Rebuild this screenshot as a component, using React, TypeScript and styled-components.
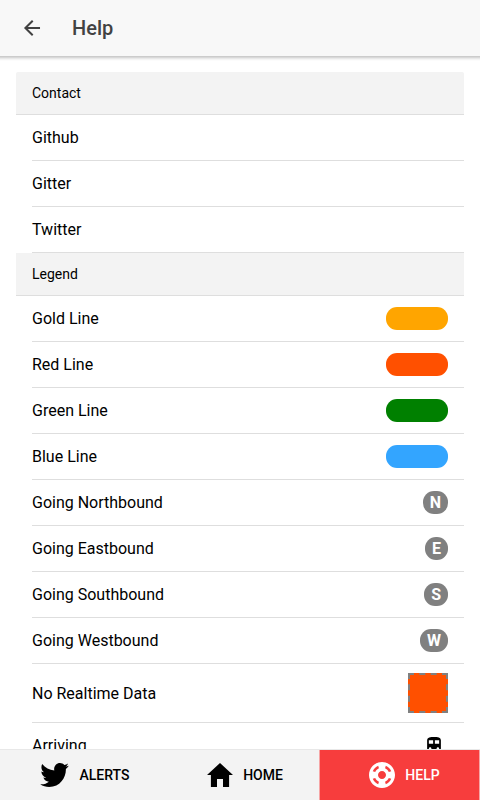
import React from "react";
import styled, { createGlobalStyle, css } from "styled-components";
import {
  IoLogoTwitter,
  IoMdArrowBack,
  IoMdHelpBuoy,
  IoMdHome,
  IoMdTrain,
} from "react-icons/io";

const GlobalStyle = createGlobalStyle`
  * { box-sizing: border-box; }
  body {
    margin: 0;
    overflow: hidden;
    background: #fff;
    color: #000;
    font-family: Roboto, "Open Sans", sans-serif;
  }
`;

const Page = styled.div`
  display: flex;
  flex-direction: column;
  height: 800px;
  overflow: hidden;
`;

const Toolbar = styled.header`
  display: flex;
  flex: none;
  align-items: center;
  height: 56px;
  padding-left: 20px;
  background: #f8f8f8;
  color: #424242;
`;

const ToolbarShadow = styled.div`
  flex: none;
  height: 5px;
  background: linear-gradient(
    #cccccc 0 1px,
    #d9d9d9 1px 2px,
    #e9e9e9 2px 3px,
    #f5f5f5 3px 4px,
    #fcfcfc 4px 5px
  );
`;

const BackButton = styled.button`
  display: flex;
  width: 24px;
  height: 24px;
  padding: 0;
  border: 0;
  background: none;
  color: inherit;
  font-size: 24px;
`;

const Title = styled.h1`
  margin: 0 0 0 28px;
  font-size: 20px;
  font-weight: 500;
  line-height: 24px;
`;

const Content = styled.main`
  flex: 1;
  min-height: 0;
  overflow: hidden;
  padding: 11px 16px 16px;
`;

const List = styled.div`
  border-radius: 2px;
  overflow: hidden;
`;

const Divider = styled.div`
  display: flex;
  align-items: center;
  height: 43px;
  padding-left: 16px;
  border-bottom: 1px solid #dedede;
  background: #f3f3f3;
  font-size: 14px;
`;

const Row = styled.div`
  display: flex;
  align-items: center;
  justify-content: space-between;
  min-height: 46px;
  margin-left: 16px;
  padding-right: 16px;
  border-bottom: 1px solid #dedede;
  font-size: 16px;
`;

const badge = css`
  height: 23px;
  border-radius: 11px;
`;

const LineSwatch = styled.span<{ $color: string }>`
  ${badge}
  width: 62px;
  background: ${(p) => p.$color};
`;

const Direction = styled.span`
  ${badge}
  padding: 0 7px;
  background: #808080;
  color: #fff;
  font-size: 16px;
  font-weight: 700;
  line-height: 23px;
`;

const DashedSwatch = styled.span`
  width: 40px;
  height: 40px;
  margin: 9px 0;
  border: 2px dashed #808080;
  background: #ff5000;
`;

const TrainIcon = styled(IoMdTrain)`
  width: 20px;
  height: 20px;
  margin: 0 4px 2px 0;
`;

const TabBar = styled.nav`
  display: flex;
  flex: none;
  height: 51px;
  border-top: 1px solid #e8e8e8;
  background: #f3f3f3;
`;

const activeTab = css`
  width: 161px;
  margin-left: -1px;
  border: solid #f6a5a5;
  border-width: 0 1px;
  background: #f73d3d;
  background-clip: padding-box;
  color: #fff;
`;

const Tab = styled.a<{ $active?: boolean; $gap?: number; $shift?: number }>`
  display: flex;
  flex: none;
  width: 160px;
  align-items: center;
  justify-content: center;
  gap: ${(p) => p.$gap ?? 7}px;
  padding-left: ${(p) => p.$shift ?? 7}px;
  color: #000;
  font-size: 14px;
  font-weight: 500;
  ${(p) => p.$active && activeTab}

  svg {
    width: 32px;
    height: 32px;
  }
`;

const TwitterIcon = styled(IoLogoTwitter)`
  && {
    width: 31px;
  }
`;

const contacts = ["Github", "Gitter", "Twitter"];

const lines = [
  ["Gold Line", "#ffa500"],
  ["Red Line", "#ff5000"],
  ["Green Line", "#008000"],
  ["Blue Line", "#33a5ff"],
];

const directions = ["Northbound", "Eastbound", "Southbound", "Westbound"];

export default function App() {
  return (
    <Page>
      <GlobalStyle />
      <Toolbar>
        <BackButton aria-label="Back">
          <IoMdArrowBack />
        </BackButton>
        <Title>Help</Title>
      </Toolbar>
      <ToolbarShadow />
      <Content>
        <List>
          <Divider>Contact</Divider>
          {contacts.map((name) => (
            <Row key={name}>{name}</Row>
          ))}
          <Divider>Legend</Divider>
          {lines.map(([name, color]) => (
            <Row key={name}>
              {name}
              <LineSwatch $color={color} />
            </Row>
          ))}
          {directions.map((name) => (
            <Row key={name}>
              Going {name}
              <Direction>{name[0]}</Direction>
            </Row>
          ))}
          <Row>
            No Realtime Data
            <DashedSwatch />
          </Row>
          <Row>
            Arriving
            <TrainIcon />
          </Row>
        </List>
      </Content>
      <TabBar>
        <Tab $gap={10} $shift={8}>
          <TwitterIcon preserveAspectRatio="none" />
          ALERTS
        </Tab>
        <Tab>
          <IoMdHome />
          HOME
        </Tab>
        <Tab $active>
          <IoMdHelpBuoy />
          HELP
        </Tab>
      </TabBar>
    </Page>
  );
}
